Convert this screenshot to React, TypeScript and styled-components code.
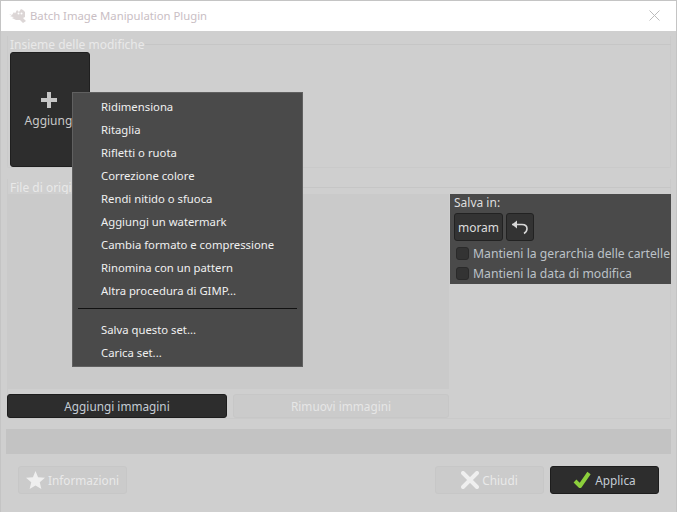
import styled, { createGlobalStyle } from 'styled-components';

const effects = [
  'Ridimensiona',
  'Ritaglia',
  'Rifletti o ruota',
  'Correzione colore',
  'Rendi nitido o sfuoca',
  'Aggiungi un watermark',
  'Cambia formato e compressione',
  'Rinomina con un pattern',
  'Altra procedura di GIMP...',
];

const setActions = ['Salva questo set...', 'Carica set...'];

const GlobalStyle = createGlobalStyle`
  html, body {
    margin: 0;
    padding: 0;
    background: #cfcfcf;
  }
  * {
    box-sizing: border-box;
  }
`;

const App = () => {
  return (
    <>
      <GlobalStyle />
      <Dialog>
        <TitleBar>
          <GimpIcon viewBox="0 0 17 14">
            <path
              d="M0 5 3 6 5 3 6 4.500 8 1 10 3 12 0 14 1 16 3 16 8 14 9 17 12 14 14 11 11 7 11 3 9 5 8 1 7.500 3 7Z"
              fill="#dcd6d6"
            />
            <circle cx="9.500" cy="4.500" r="1" fill="#fff" />
            <circle cx="12.500" cy="4.500" r="1" fill="#fff" />
          </GimpIcon>
          <TitleText>Batch Image Manipulation Plugin</TitleText>
          <CloseIcon viewBox="0 0 11 11">
            <path d="M.5.5l10 10M10.500.5l-10 10" stroke="#bcbcbc" strokeWidth="1" />
          </CloseIcon>
        </TitleBar>

        <Content>
          <SetFrame>
            <FrameLegend>
              <LegendText>Insieme delle modifiche</LegendText>
              <LegendLine />
            </FrameLegend>
            <SetRow>
              <AddTile>
                <PlusIcon viewBox="0 0 18 18">
                  <path d="M9 1v16M1 9h16" stroke="#c6c6c6" strokeWidth="4" />
                </PlusIcon>
                <AddLabel>Aggiungi</AddLabel>
              </AddTile>
            </SetRow>
          </SetFrame>

          <SourceFrame>
            <FrameLegend>
              <LegendText>File di origine</LegendText>
              <LegendLine />
            </FrameLegend>
            <SourceBody>
              <ImageList />
              <SavePanel>
                <SaveLabel>Salva in:</SaveLabel>
                <SaveButtons>
                  <FolderButton>moram</FolderButton>
                  <BackButton>
                    <svg width="18" height="15" viewBox="0 0 18 15" fill="none">
                      <path
                        d="M1 4.500h10c3 0 5 1.800 5 4.300 0 2-1 3.500-3 4.700"
                        stroke="#d8d8d8"
                        strokeWidth="1.600"
                      />
                      <path d="M6 .5 1 4.500 6 8.500Z" fill="#d8d8d8" />
                    </svg>
                  </BackButton>
                </SaveButtons>
                <CheckList>
                  <CheckRow>
                    <CheckBox />
                    <CheckLabel>Mantieni la gerarchia delle cartelle</CheckLabel>
                  </CheckRow>
                  <CheckRow>
                    <CheckBox />
                    <CheckLabel>Mantieni la data di modifica</CheckLabel>
                  </CheckRow>
                </CheckList>
              </SavePanel>
            </SourceBody>
            <ImageButtons>
              <WideButton $active>Aggiungi immagini</WideButton>
              <WideButton>Rimuovi immagini</WideButton>
            </ImageButtons>
          </SourceFrame>

          <ProgressBar />

          <Footer>
            <ActionButton>
              <svg width="19" height="18" viewBox="0 0 20 19">
                <path
                  d="M10 0l2.700 6.500 7.300.600-5.500 4.700 1.700 7.200L10 15.200 3.800 19l1.700-7.200L0 7.100l7.300-.600z"
                  fill="#efefef"
                />
              </svg>
              Informazioni
            </ActionButton>
            <FooterSpacer />
            <ActionButton>
              <svg width="18" height="18" viewBox="0 0 18 18">
                <path d="M2 2l14 14M16 2 2 16" stroke="#efefef" strokeWidth="4" strokeLinecap="round" />
              </svg>
              Chiudi
            </ActionButton>
            <ActionButton $active>
              <svg width="19" height="18" viewBox="0 0 19 18" fill="none">
                <path d="M2 10l5 5L16 2" stroke="#8ccf3c" strokeWidth="4" strokeLinejoin="round" />
              </svg>
              Applica
            </ActionButton>
          </Footer>
        </Content>

        <PopupMenu>
          {effects.map((item) => (
            <MenuItem key={item}>{item}</MenuItem>
          ))}
          <MenuSeparator />
          {setActions.map((item) => (
            <MenuItem key={item}>{item}</MenuItem>
          ))}
        </PopupMenu>
      </Dialog>
    </>
  );
};

const Dialog = styled.div`
  position: relative;
  width: 677px;
  height: 512px;
  overflow: hidden;
  background: #cfcfcf;
  border-top: 1px solid #c4c4c4;
  border-left: 1px solid #c4c4c4;
  border-right: 1px solid #c4c4c4;
  font-family: 'Noto Sans', sans-serif;
  font-size: 12px;
`;

const TitleBar = styled.div`
  display: flex;
  align-items: center;
  height: 30px;
  padding: 0 16px 1px 8px;
  background: #ffffff;
  font-size: 11.3px;
`;

const GimpIcon = styled.svg`
  width: 17px;
  height: 14px;
  margin-right: 4px;
`;

const TitleText = styled.span`
  flex: 1;
  color: #c9bec4;
`;

const CloseIcon = styled.svg`
  width: 11px;
  height: 11px;
`;

const Content = styled.div`
  display: flex;
  flex-direction: column;
  padding: 5px 5px 0 6px;
`;

const SetFrame = styled.div`
  display: flex;
  flex-direction: column;
  height: 132px;
  border: 1px solid #cacaca;
  border-top: none;
  border-radius: 0 0 2px 2px;
`;

const SourceFrame = styled(SetFrame)`
  height: 240px;
  margin-top: 11px;
`;

const FrameLegend = styled.div`
  display: flex;
  flex-shrink: 0;
  align-items: center;
  height: 16px;
  margin: 0 -1px;
`;

const LegendText = styled.span`
  padding-left: 3px;
  color: #e9e9e9;
`;

const LegendLine = styled.div`
  flex: 1;
  height: 1px;
  background: #c6c6c6;
`;

const SetRow = styled.div`
  display: flex;
  flex: 1;
  padding-left: 2px;
`;

const AddTile = styled.div`
  display: flex;
  flex-direction: column;
  align-items: center;
  width: 80px;
  height: 115px;
  padding-top: 38px;
  background: #2d2d2d;
  border: 1px solid #1f1f1f;
  border-radius: 3px;
`;

const PlusIcon = styled.svg`
  width: 18px;
  height: 18px;
  margin: 0 2px 3px 0;
`;

const AddLabel = styled.span`
  color: #c8c8c8;
`;

const SourceBody = styled.div`
  display: flex;
  flex-shrink: 0;
  height: 195px;
  margin: -1px -1px 0;
`;

const ImageList = styled.div`
  width: 442px;
  background: #cacaca;
`;

const SavePanel = styled.div`
  display: flex;
  flex-direction: column;
  width: 221px;
  height: 90px;
  margin-left: 1px;
  padding: 1px 0 0 4px;
  background: #4a4a4a;
`;

const SaveLabel = styled.span`
  color: #dedede;
  line-height: 15px;
`;

const SaveButtons = styled.div`
  display: flex;
  gap: 3px;
  margin-top: 3px;
`;

const FolderButton = styled.div`
  display: flex;
  align-items: center;
  justify-content: center;
  width: 49px;
  height: 28px;
  background: #333333;
  border: 1px solid #222222;
  border-radius: 3px;
  color: #dcdcdc;
`;

const BackButton = styled(FolderButton)`
  width: 28px;
`;

const CheckList = styled.div`
  display: flex;
  flex-direction: column;
  margin-top: 2px;
`;

const CheckRow = styled.div`
  display: flex;
  align-items: center;
  gap: 4px;
  height: 20px;
  padding-left: 2px;
  white-space: nowrap;
`;

const CheckBox = styled.span`
  flex-shrink: 0;
  width: 13px;
  height: 13px;
  background: #333333;
  border: 1px solid #2a2a2a;
  border-radius: 3px;
`;

const CheckLabel = styled.span`
  font-size: 12.2px;
  color: #bcc2c8;
`;

const ImageButtons = styled.div`
  display: grid;
  grid-template-columns: 220px 216px;
  gap: 6px;
  margin: 5px 0 0 -1px;
  font-size: 11.8px;
`;

const WideButton = styled.div<{ $active?: boolean }>`
  display: flex;
  align-items: center;
  justify-content: center;
  height: 24px;
  background: ${(props) => (props.$active ? '#2d2d2d' : '#cbcbcb')};
  border: 1px solid ${(props) => (props.$active ? '#1d1d1d' : '#c7c7c7')};
  border-radius: 3px;
  color: ${(props) => (props.$active ? '#c4ccd4' : '#e6e6e6')};
`;

const ProgressBar = styled.div`
  height: 25px;
  margin: 10px 0 0 -1px;
  background: #c3c3c3;
`;

const Footer = styled.div`
  display: flex;
  gap: 6px;
  margin-top: 12px;
  padding: 0 12px 0 11px;
  font-size: 11.8px;
`;

const FooterSpacer = styled.div`
  flex: 1;
`;

const ActionButton = styled.div<{ $active?: boolean }>`
  display: flex;
  align-items: center;
  justify-content: center;
  gap: 3px;
  width: 109px;
  height: 28px;
  background: ${(props) => (props.$active ? '#2d2d2d' : '#cbcbcb')};
  border: 1px solid ${(props) => (props.$active ? '#1d1d1d' : '#c7c7c7')};
  border-radius: 3px;
  color: ${(props) => (props.$active ? '#c4ccd4' : '#e9e9e9')};
`;

const PopupMenu = styled.div`
  position: absolute;
  top: 91px;
  left: 71px;
  width: 231px;
  height: 275px;
  padding-top: 2px;
  background: #4a4a4a;
  border: 1px solid #606060;
  font-size: 11.3px;
`;

const MenuItem = styled.div`
  height: 23px;
  padding-left: 28px;
  line-height: 23px;
  color: #f0f0f0;
`;

const MenuSeparator = styled.div`
  height: 1px;
  margin: 6px 5px 9px 5px;
  background: #111111;
`;

export default App;
